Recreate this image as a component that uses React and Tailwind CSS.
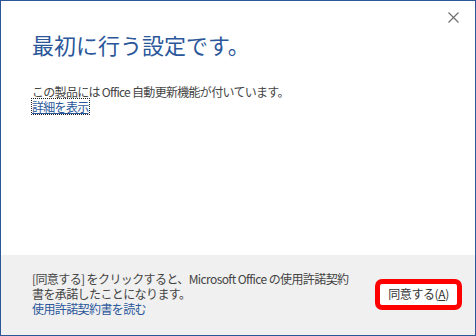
export default function App() {
  const font = "font-['Noto_Sans_CJK_JP','Noto_Sans',sans-serif]"
  return (
    <div className={`w-[476px] h-[336px] flex flex-col border border-[#2b579a] bg-white ${font}`}>
      {/* Main area */}
      <div className="flex-1 flex flex-col relative">
        <button className="absolute right-[16px] top-[10px] w-[12px] h-[12px] flex items-center justify-center">
          <svg width="11" height="11" viewBox="0 0 11 11">
            <path d="M0.5 0.5 L10.5 10.5 M10.5 0.5 L0.5 10.5" stroke="#6b6b6b" strokeWidth="1.1" fill="none" />
          </svg>
        </button>

        <h1 className="mt-[31px] ml-[31px] text-[22px] leading-[24px] text-[#2b579a] font-normal">
          最初に行う設定です。
        </h1>

        <div className="mt-[29px] ml-[31px] text-[12px] leading-[14px] tracking-[-0.7px] text-[#444]">
          <p>この製品には Office 自動更新機能が付いています。</p>
          <a className="inline-block text-[#2b579a] underline outline-1 outline-dotted outline-[#222] outline-offset-0 leading-[15px]">
            詳細を表示
          </a>
        </div>
      </div>

      {/* Footer */}
      <div className="h-[80px] bg-[#f0f0f0] flex items-center justify-between pl-[31px] pr-[13px]">
        <div className="text-[12px] leading-[15px] tracking-[-0.6px] text-[#444] -mt-[3px]">
          <p>[同意する] をクリックすると、Microsoft Office の使用許諾契約<br />書を承諾したことになります。</p>
          <a className="text-[#2b579a]">使用許諾契約書を読む</a>
        </div>
        <button className="w-[87px] h-[31px] rounded-[7px] border-[5px] border-[#ff0000] bg-white flex items-center justify-center text-[12px] text-[#333] tracking-[-0.4px] -mt-[2px]">
          同意する(<span className="underline">A</span>)
        </button>
      </div>
    </div>
  )
}
